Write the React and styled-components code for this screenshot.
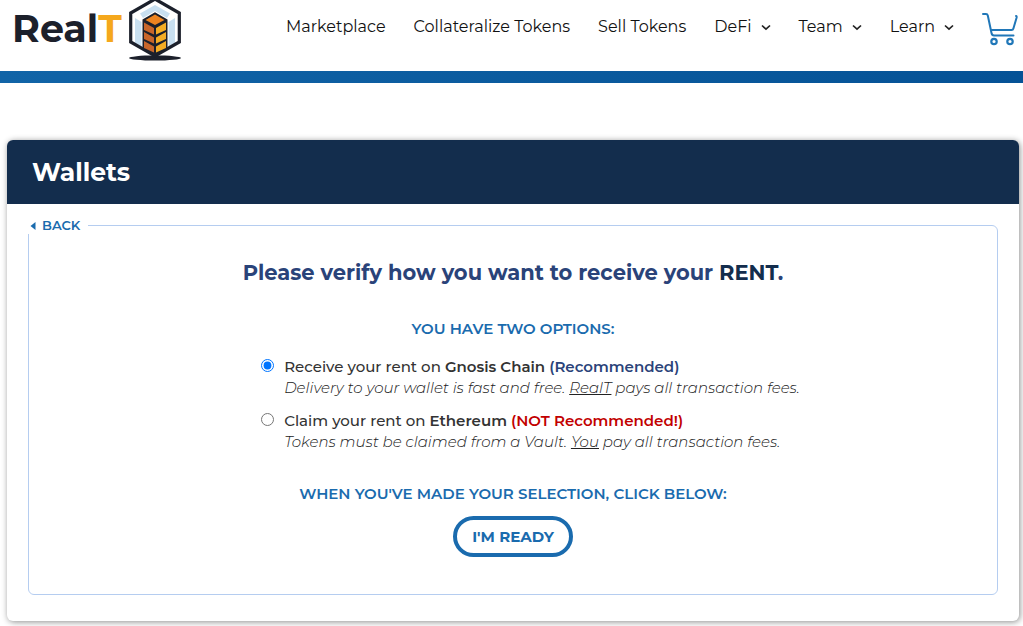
import React, { useState } from "react";
import styled, { createGlobalStyle } from "styled-components";

const GlobalStyle = createGlobalStyle`
  * {
    box-sizing: border-box;
  }

  body {
    margin: 0;
    background: #fff;
    color: #333;
    font-family: Montserrat, Inter, sans-serif;
    font-size: 15px;
  }
`;

const Header = styled.header`
  display: flex;
  align-items: center;
  justify-content: space-between;
  height: 71px;
  padding: 0 5px 0 12px;
`;

const Brand = styled.a`
  display: flex;
  align-items: center;
  align-self: flex-start;
  height: 62px;
  gap: 5px;
  color: #1c202b;
  font-size: 38px;
  font-weight: 700;
  line-height: 57px;
  text-decoration: none;

  span {
    color: #f5a81c;
  }
`;

const BrandName = styled.div`
  align-self: flex-start;
`;

const Nav = styled.nav`
  display: flex;
  align-items: center;
  gap: 28px;
  padding-bottom: 17px;
`;

const NavLink = styled.a`
  display: flex;
  align-items: center;
  gap: 9px;
  color: #111;
  font-size: 16px;
  line-height: 24px;
  text-decoration: none;
  white-space: nowrap;
`;

const CartLink = styled.a`
  display: flex;
  padding-top: 4px;
`;

const Stripe = styled.div`
  height: 12px;
  background: linear-gradient(90deg, #1164a7, #055296);
`;

const Card = styled.main`
  margin: 57px 4px 5px 7px;
  border-radius: 6px;
  background: #fff;
  box-shadow: 1px 1px 6px rgba(0, 0, 0, 0.45);
  overflow: hidden;
`;

const CardTitle = styled.h1`
  margin: 0;
  padding: 0 25px;
  background: #132d4d;
  color: #fff;
  font-size: 25px;
  font-weight: 700;
  line-height: 64px;
`;

const Form = styled.form`
  padding: 13px 21px 26px;
`;

const Panel = styled.fieldset`
  min-width: 0;
  margin: 0;
  padding: 24px 20px 37px;
  border: 1px solid #b5cdf0;
  border-radius: 6px;
  text-align: center;
`;

const Legend = styled.legend`
  margin-left: -21px;
  padding: 0 8px 0 0;
  background: #fff;
  line-height: 17px;
  text-align: left;
`;

const BackButton = styled.button`
  display: flex;
  align-items: center;
  gap: 6px;
  padding: 0 0 0 2px;
  border: none;
  background: none;
  color: #1a6bae;
  font: inherit;
  font-size: 13px;
  font-weight: 600;
  line-height: 17px;
  cursor: pointer;
`;

const Question = styled.h2`
  margin: 0 0 31px;
  color: #2a4379;
  font-size: 21px;
  font-weight: 700;
  line-height: 30px;

  strong {
    color: #132d4d;
    font-weight: 700;
  }
`;

const Prompt = styled.p`
  margin: 0;
  color: #1a6bae;
  font-size: 15px;
  font-weight: 600;
  line-height: 20px;
`;

const Options = styled.div`
  display: flex;
  flex-direction: column;
  gap: 13px;
  width: fit-content;
  margin: 18px auto 32px;
  padding-left: 35px;
  text-align: left;
`;

const Option = styled.div`
  display: flex;
  align-items: flex-start;
  gap: 10px;
`;

const Radio = styled.input`
  width: 13px;
  height: 13px;
  margin: 2px 0 0;
`;

const OptionLabel = styled.label`
  display: block;
  font-size: 15px;
  font-weight: 500;
  line-height: 20px;

  strong {
    font-weight: 600;
  }
`;

const Note = styled.strong`
  color: ${({ $warning }) => ($warning ? "#c20000" : "#2a4379")};
`;

const OptionHint = styled.div`
  color: #222;
  font-size: 15px;
  font-style: italic;
  font-weight: 300;
  line-height: 21px;
`;

const ReadyButton = styled.button`
  height: 41px;
  margin-top: 12px;
  padding: 0 15px;
  border: 4px solid #1a6bae;
  border-radius: 21px;
  background: #fff;
  color: #1a6bae;
  font: inherit;
  font-size: 15px;
  font-weight: 700;
  cursor: pointer;
`;

const Cube = () => (
  <svg width="56" height="62" viewBox="0 0 56 62" aria-hidden="true">
    <ellipse cx="28" cy="58" rx="26" ry="2.6" fill="#1c202b" />
    <path d="M28 -1 L52.3 13 V42 L28 56 L3.7 42 V13 Z" fill="#fff" />
    <path d="M28 5 L43 13.5 L40 18 L28 11 L16 18 L13 13.5 Z" fill="#c8dff0" />
    <path d="M8 18 L14.5 22 V47 L8 43 Z M48 18 L41.5 22 V47 L48 43 Z" fill="#c8dff0" />
    <path d="M28 -1 L52.3 13 V42 L28 56 L3.7 42 V13 Z" fill="none" stroke="#1c202b" strokeWidth="3.2" />
    <path d="M15.5 19.5 L28 12.3 L40.5 19.5 V49 L28 57 L15.5 49 Z" fill="#1c202b" />
    <path d="M28 14.5 L37.5 20 L28 25 L18.5 20 Z" fill="#ed8420" />
    <g fill="#c9662a">
      <path d="M17 22.5 L27 28 V34.5 L17 30 Z" />
      <path d="M17 32 L27 37.5 V43.5 L17 39 Z" />
      <path d="M17 41 L27 46.5 V52.5 L17 48 Z" />
    </g>
    <g fill="#f5ad24">
      <path d="M39 22.5 L29 28 V34.5 L39 30 Z" />
      <path d="M39 32 L29 37.5 V43.5 L39 39 Z" />
      <path d="M39 41 L29 46.5 V52.5 L39 48 Z" />
    </g>
  </svg>
);

const Chevron = () => (
  <svg width="10" height="7" viewBox="0 0 10 7" aria-hidden="true">
    <path d="M1 1.5 L5 5.2 L9 1.5" fill="none" stroke="#222" strokeWidth="1.7" />
  </svg>
);

const Cart = () => (
  <svg width="36" height="34" viewBox="0 0 36 34" fill="none" stroke="#2077b8" strokeWidth="2" strokeLinecap="round" aria-hidden="true">
    <path d="M1 2 H4 Q5.4 2 5.8 3.5 L9.5 21 Q10 23.5 12 23.5 H31.5" />
    <path d="M9 18 H29.5 Q31 18 31.4 16.5 L34.5 6 Q35 4 34 4" />
    <circle cx="12" cy="29.5" r="2.7" strokeWidth="2.2" />
    <circle cx="28" cy="29.5" r="2.7" strokeWidth="2.2" />
  </svg>
);

const links = [
  { title: "Marketplace" },
  { title: "Collateralize Tokens" },
  { title: "Sell Tokens" },
  { title: "DeFi", menu: true },
  { title: "Team", menu: true },
  { title: "Learn", menu: true },
];

const App = () => {
  const [chain, setChain] = useState("gnosis");

  return (
    <>
      <GlobalStyle />
      <Header>
        <Brand href="#">
          <BrandName>
            Real<span>T</span>
          </BrandName>
          <Cube />
        </Brand>
        <Nav>
          {links.map((link) => (
            <NavLink href="#" key={link.title}>
              {link.title}
              {link.menu && <Chevron />}
            </NavLink>
          ))}
          <CartLink href="#" aria-label="Cart">
            <Cart />
          </CartLink>
        </Nav>
      </Header>
      <Stripe />
      <Card>
        <CardTitle>Wallets</CardTitle>
        <Form onSubmit={(e) => e.preventDefault()}>
          <Panel>
            <Legend>
              <BackButton type="button">
                <svg width="6" height="8" viewBox="0 0 6 8" aria-hidden="true">
                  <path d="M5.5 0 V8 L0.5 4 Z" fill="#1a6bae" />
                </svg>
                BACK
              </BackButton>
            </Legend>
            <Question>
              Please verify how you want to receive your <strong>RENT</strong>.
            </Question>
            <Prompt>YOU HAVE TWO OPTIONS:</Prompt>
            <Options>
              <Option>
                <Radio
                  type="radio"
                  name="chain"
                  id="gnosis"
                  checked={chain === "gnosis"}
                  onChange={() => setChain("gnosis")}
                />
                <div>
                  <OptionLabel htmlFor="gnosis">
                    Receive your rent on <strong>Gnosis Chain</strong> <Note>(Recommended)</Note>
                  </OptionLabel>
                  <OptionHint>
                    Delivery to your wallet is fast and free. <u>RealT</u> pays all transaction fees.
                  </OptionHint>
                </div>
              </Option>
              <Option>
                <Radio
                  type="radio"
                  name="chain"
                  id="ethereum"
                  checked={chain === "ethereum"}
                  onChange={() => setChain("ethereum")}
                />
                <div>
                  <OptionLabel htmlFor="ethereum">
                    Claim your rent on <strong>Ethereum</strong> <Note $warning>(NOT Recommended!)</Note>
                  </OptionLabel>
                  <OptionHint>
                    Tokens must be claimed from a Vault. <u>You</u> pay all transaction fees.
                  </OptionHint>
                </div>
              </Option>
            </Options>
            <Prompt>WHEN YOU'VE MADE YOUR SELECTION, CLICK BELOW:</Prompt>
            <ReadyButton type="submit">I'M READY</ReadyButton>
          </Panel>
        </Form>
      </Card>
    </>
  );
};

export default App;
